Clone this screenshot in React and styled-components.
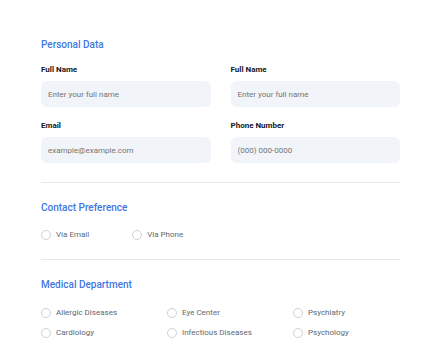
import React from 'react';
import styled, { createGlobalStyle } from 'styled-components';

const Global = createGlobalStyle`
  body {
    margin: 0;
    background: #fff;
    font-family: Roboto, 'Noto Sans', sans-serif;
  }
`;

const Page = styled.div`
  padding: 38px 40px 0 41px;
  width: 359px;
`;

const Section = styled.section`
  padding-bottom: ${(p) => p.pb || 18}px;
  border-bottom: ${(p) => (p.last ? 'none' : '1px solid #e6e9ee')};
  margin-bottom: 18px;
`;

const Heading = styled.h2`
  margin: 0 0 ${(p) => p.gap || 12}px;
  font-size: 10px;
  line-height: 14px;
  font-weight: 500;
  color: #4177e2;
`;

const FieldGrid = styled.div`
  display: grid;
  grid-template-columns: 1fr 1fr;
  column-gap: 20px;
  row-gap: 13px;
`;

const Field = styled.label`
  display: flex;
  flex-direction: column;
  gap: 5px;
`;

const Label = styled.span`
  font-size: 8px;
  line-height: 12px;
  font-weight: 700;
  color: #16181d;
`;

const Input = styled.input`
  box-sizing: border-box;
  width: 100%;
  height: 26px;
  border: none;
  border-radius: 6px;
  background: #f1f4f8;
  padding: 0 7px;
  font-family: inherit;
  font-size: 8px;
  color: #333;
  outline: none;

  ::placeholder {
    color: #a8b0bb;
  }
`;

const RadioRow = styled.div`
  display: flex;
  gap: 43px;
`;

const RadioGrid = styled.div`
  display: grid;
  grid-template-columns: repeat(3, 1fr);
  column-gap: 19px;
  row-gap: 8px;
`;

const Option = styled.label`
  display: flex;
  align-items: center;
  gap: 5px;
  font-size: 8px;
  line-height: 12px;
  color: #62676f;
`;

const Circle = styled.span`
  box-sizing: border-box;
  width: 10px;
  height: 10px;
  border-radius: 50%;
  border: 1px solid #cdd1d7;
  background: #fff;
  flex-shrink: 0;
`;

const Radio = ({ children }) => (
  <Option>
    <Circle />
    {children}
  </Option>
);

const departments = [
  'Allergic Diseases',
  'Eye Center',
  'Psychiatry',
  'Cardiology',
  'Infectious Diseases',
  'Psychology',
];

export default function App() {
  return (
    <>
      <Global />
      <Page>
        <Section pb={19}>
          <Heading>Personal Data</Heading>
          <FieldGrid>
            <Field>
              <Label>Full Name</Label>
              <Input placeholder="Enter your full name" />
            </Field>
            <Field>
              <Label>Full Name</Label>
              <Input placeholder="Enter your full name" />
            </Field>
            <Field>
              <Label>Email</Label>
              <Input placeholder="example@example.com" />
            </Field>
            <Field>
              <Label>Phone Number</Label>
              <Input placeholder="(000) 000-0000" />
            </Field>
          </FieldGrid>
        </Section>
        <Section>
          <Heading gap={14}>Contact Preference</Heading>
          <RadioRow>
            <Radio>Via Email</Radio>
            <Radio>Via Phone</Radio>
          </RadioRow>
        </Section>
        <Section last>
          <Heading gap={15}>Medical Department</Heading>
          <RadioGrid>
            {departments.map((d) => (
              <Radio key={d}>{d}</Radio>
            ))}
          </RadioGrid>
        </Section>
      </Page>
    </>
  );
}
